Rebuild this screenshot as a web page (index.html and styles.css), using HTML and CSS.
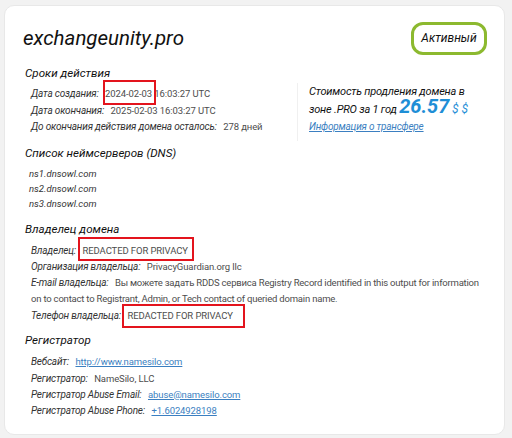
FILE: index.html
```html
<!DOCTYPE html>
<html lang="ru">
<head>
    <meta charset="UTF-8">
    <title>exchangeunity.pro — whois</title>
    <meta name="viewport" content="width=device-width, initial-scale=1">
    <link rel="stylesheet" href="styles.css">
</head>
<body>

    <div class="card">

        <div class="head">
            <h1 class="domain">exchangeunity.pro</h1>
            <span class="status">Активный</span>
        </div>

        <div class="top">
            <section class="dates">
                <h2>Сроки действия</h2>
                <p class="row"><span class="lbl">Дата создания:</span> <span class="val"><span class="mark m-date">2024-02-03</span> 16:03:27 UTC</span></p>
                <p class="row"><span class="lbl">Дата окончания:</span> <span class="val">2025-02-03 16:03:27 UTC</span></p>
                <p class="row"><span class="lbl">До окончания действия домена осталось:</span> <span class="val">278 дней</span></p>
            </section>

            <aside class="renew">
                <p>Стоимость продления домена в зоне .PRO за 1 год <b class="price">26.57</b> <span class="cur">$ $</span></p>
                <a href="#" class="transfer">Информация о трансфере</a>
            </aside>
        </div>

        <section class="block">
            <h2>Список неймсерверов (DNS)</h2>
            <ul class="ns">
                <li>ns1.dnsowl.com</li>
                <li>ns2.dnsowl.com</li>
                <li>ns3.dnsowl.com</li>
            </ul>
        </section>

        <section class="block">
            <h2>Владелец домена</h2>
            <p class="row"><span class="lbl">Владелец:</span> <span class="val"><span class="mark m-owner">REDACTED FOR PRIVACY</span></span></p>
            <p class="row"><span class="lbl">Организация владельца:</span> <span class="val">PrivacyGuardian.org llc</span></p>
            <p class="row"><span class="lbl">E-mail владельца:</span> <span class="val val-long">Вы можете задать RDDS сервиса Registry Record identified in this output for information on to contact to Registrant, Admin, or Tech contact of queried domain name.</span></p>
            <p class="row"><span class="lbl">Телефон владельца:</span> <span class="val"><span class="mark m-phone">REDACTED FOR PRIVACY</span></span></p>
        </section>

        <section class="block block-last">
            <h2>Регистратор</h2>
            <p class="row"><span class="lbl">Вебсайт:</span> <a href="#" class="val link">http://www.namesilo.com</a></p>
            <p class="row"><span class="lbl">Регистратор:</span> <span class="val">NameSilo, LLC</span></p>
            <p class="row"><span class="lbl">Регистратор Abuse Email:</span> <a href="#" class="val link">abuse@namesilo.com</a></p>
            <p class="row"><span class="lbl">Регистратор Abuse Phone:</span> <a href="#" class="val link">+1.6024928198</a></p>
        </section>

    </div>

</body>
</html>
```

FILE: styles.css
```css
html {
    box-sizing: border-box;
}

*,
*:before,
*:after {
    box-sizing: inherit;
}

body {
    margin: 0;
    padding: 5px 7px 5px 4px;
    background: #f2f2f2;
    font-family: Roboto, "Liberation Sans", sans-serif;
    color: #222;
}

h1,
h2,
p,
ul {
    margin: 0;
    padding: 0;
}

.card {
    background: #fff;
    border: 1px solid #e8e8e8;
    border-radius: 10px;
    padding: 16px 17px 15px 18px;
}

.head {
    display: flex;
    align-items: center;
    justify-content: space-between;
    height: 33px;
}

.domain {
    font-size: 20.5px;
    font-style: italic;
    font-weight: normal;
    line-height: 33px;
    color: #111;
}

.status {
    display: inline-block;
    width: 76px;
    height: 33px;
    line-height: 27px;
    text-align: center;
    border: 3px solid #8cb92f;
    border-radius: 12px;
    font-size: 12px;
    font-style: italic;
    color: #111;
}

.top {
    display: flex;
    align-items: flex-start;
    margin-top: 8.75px;
}

.dates {
    flex: 0 0 274px;
}

.block {
    margin-top: 8.75px;
}

.block-last {
    margin-top: 7px;
}

h2 {
    font-size: 11.6px;
    font-style: italic;
    font-weight: normal;
    line-height: 18px;
    margin-bottom: 4.5px;
    padding-left: 2px;
    color: #111;
}

.block-last h2 {
    margin-bottom: 5.5px;
}

.row {
    font-size: 10px;
    line-height: 16.25px;
    padding-left: 8px;
}

.lbl {
    font-style: italic;
    letter-spacing: -0.2px;
    color: #333;
    margin-right: 4px;
}

.val {
    font-size: 9.5px;
    letter-spacing: -0.1px;
    color: #4d4d4d;
}

.val-long {
    letter-spacing: -0.2px;
}

.link {
    color: #3b7fc1;
}

.mark {
    position: relative;
}

.mark:after {
    content: "";
    position: absolute;
    border: 2px solid #e3141d;
}

.m-date:after {
    top: -8px;
    bottom: -6px;
    left: -2px;
    right: -4px;
}

.m-owner:after {
    top: -8px;
    bottom: -5px;
    left: -5px;
    right: -6px;
}

.m-phone:after {
    top: -6px;
    bottom: -7px;
    left: -5px;
    right: -12px;
}

.ns {
    list-style: none;
    padding-left: 6px;
    font-size: 9.5px;
    font-style: italic;
    line-height: 15px;
    color: #333;
}

.renew {
    margin: 19px 0 -6px;
    border-left: 1px solid #f0f0f0;
    padding: 0 0 6px 11px;
    font-size: 11px;
    font-style: italic;
    letter-spacing: -0.2px;
    line-height: 17px;
    color: #111;
}

.price {
    font-size: 20px;
    letter-spacing: 0;
    line-height: 12px;
    color: #1e8ed6;
}

.cur {
    font-size: 12px;
    letter-spacing: 0;
    color: #1e8ed6;
}

.transfer {
    display: block;
    font-size: 10px;
    color: #3b7fc1;
}
```
